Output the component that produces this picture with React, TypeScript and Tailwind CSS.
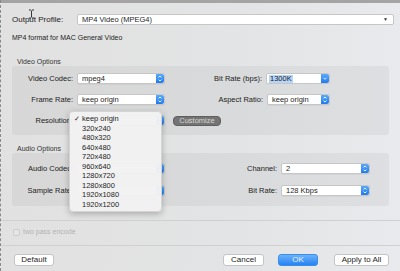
import React from "react";

const Stepper = () => (
  <div className="w-[8px] h-full rounded-r-[2px] bg-[linear-gradient(180deg,#5aa9fb,#1f7cf0)] flex items-center justify-center">
    <svg width="8" height="11" viewBox="0 0 8 11">
      <path d="M2.6 4.4 L4 3 L5.4 4.4" stroke="white" strokeWidth="0.9" fill="none" />
      <path d="M2.6 6.6 L4 8 L5.4 6.6" stroke="white" strokeWidth="0.9" fill="none" />
    </svg>
  </div>
);

function Select({ value, width }: { value: string; width: string }) {
  return (
    <div
      className={`${width} h-[11px] flex items-stretch bg-white rounded-[2px] border border-[#c6c6c6] shadow-[0_0.5px_0_rgba(0,0,0,0.08)]`}
    >
      <div className="flex-1 pl-[4px] text-[7.5px] leading-[9px] text-[#1e1e1e] truncate">{value}</div>
      <Stepper />
    </div>
  );
}

function Label({ text, width }: { text: string; width: string }) {
  return <div className={`${width} pr-[4px] text-right text-[7.5px] leading-[11px] text-[#222] whitespace-nowrap`}>{text}</div>;
}

function Button({ text, width, primary }: { text: string; width: string; primary?: boolean }) {
  return (
    <div
      className={
        primary
          ? `${width} h-[12px] rounded-[3px] bg-[linear-gradient(180deg,#6bb3fb,#2683f2)] border border-[#3a8ef0] text-[8px] leading-[10px] text-center text-[#e8f1fd]`
          : `${width} h-[12px] rounded-[3px] bg-white border border-[#c4c4c4] text-[8px] leading-[10px] text-center text-[#1e1e1e]`
      }
    >
      {text}
    </div>
  );
}

const resolutions = ["keep origin", "320x240", "480x320", "640x480", "720x480", "960x640", "1280x720", "1280x800", "1920x1080", "1920x1200"];

export default function App() {
  return (
    <div className="w-[400px] h-[271px] relative overflow-hidden border-l border-dashed border-[#8a8a8a] bg-[linear-gradient(90deg,#e1e1e1,#e3e4e5_60%,#e8eaed)] font-['Liberation_Sans',sans-serif]">
      <div className="h-[3px] bg-[#a4a4a4]" />
      <div className="pl-[11px] pr-[11px] flex flex-col">
        {/* Header */}
        <div className="mt-[11px] h-[11px] flex items-center mr-[-5px]">
          <div className="w-[65px] text-[8px] leading-[11px] text-[#222]">Output Profile:</div>
          <div className="flex-1 h-[11px] bg-white rounded-[2px] border border-[#c6c6c6] flex items-center pl-[4px] pr-[5px]">
            <div className="flex-1 text-[7.5px] leading-[9px] text-[#1e1e1e]">MP4 Video (MPEG4)</div>
            <div className="text-[5px] leading-[9px] text-[#333]">▼</div>
          </div>
        </div>
        <div className="mt-[9px] h-[8px] text-[7px] leading-[8px] text-[#222]">MP4 format for MAC General Video</div>

        {/* Video options */}
        <div className="mt-[16px] h-[8px] pl-[5px] text-[7px] leading-[8px] text-[#333]">Video Options</div>
        <div className="h-[69px] rounded-[3px] bg-black/[0.045] pt-[7px] flex flex-col gap-[10px]">
          <div className="h-[11px] flex">
            <Label text="Video Codec:" width="w-[65px]" />
            <Select value="mpeg4" width="w-[88px]" />
            <Label text="Bit Rate (bps):" width="w-[101px]" />
            <div className="w-[64px] h-[11px] flex items-stretch bg-white rounded-[2px] border border-[#c6c6c6]">
              <div className="flex-1 pl-[2px] flex items-center">
                <span className="bg-[#b5d5fb] text-[7.5px] leading-[8px] px-[1px] text-[#1e1e1e]">1300K</span>
              </div>
              <div className="w-[8px] rounded-r-[2px] bg-[linear-gradient(180deg,#5aa9fb,#1f7cf0)] flex items-center justify-center">
                <svg width="8" height="9" viewBox="0 0 8 9">
                  <path d="M2.5 3.8 L4 5.3 L5.5 3.8" stroke="white" strokeWidth="0.9" fill="none" />
                </svg>
              </div>
            </div>
          </div>
          <div className="h-[11px] flex">
            <Label text="Frame Rate:" width="w-[65px]" />
            <Select value="keep origin" width="w-[88px]" />
            <Label text="Aspect Ratio:" width="w-[102px]" />
            <Select value="keep origin" width="w-[63px]" />
          </div>
          <div className="h-[11px] flex items-center">
            <Label text="Resolution:" width="w-[65px]" />
            <Select value="" width="w-[88px]" />
            <div className="ml-[8px] w-[48px] h-[10px] rounded-[4px] bg-[#747474] border border-[#5f5f5f] text-[7.5px] leading-[8px] text-center text-[#d6d6d6]">
              Customize
            </div>
          </div>
        </div>

        {/* Audio options */}
        <div className="mt-[10px] h-[8px] pl-[5px] text-[7px] leading-[8px] text-[#333]">Audio Options</div>
        <div className="h-[53px] rounded-[3px] bg-black/[0.045] pt-[10px] flex flex-col gap-[11px]">
          <div className="h-[11px] flex">
            <Label text="Audio Codec:" width="w-[65px]" />
            <Select value="" width="w-[88px]" />
            <Label text="Channel:" width="w-[116px]" />
            <Select value="2" width="w-[89px]" />
          </div>
          <div className="h-[11px] flex">
            <Label text="Sample Rate:" width="w-[65px]" />
            <Select value="" width="w-[88px]" />
            <Label text="Bit Rate:" width="w-[116px]" />
            <Select value="128 Kbps" width="w-[89px]" />
          </div>
        </div>
      </div>

      <div className="mt-[14px] h-px bg-[#d0d0d0]" />
      <div className="mt-[7px] h-[8px] pl-[12px] flex items-center gap-[3px]">
        <div className="w-[7px] h-[7px] rounded-[2px] border border-[#cdcdcd] bg-[#e6e6e6]" />
        <div className="text-[7px] leading-[8px] text-[#b3b3b3]">two pass encode</div>
      </div>
      <div className="mt-[9px] h-px bg-[#d0d0d0]" />
      <div className="mt-[8px] h-[12px] flex pl-[13px] pr-[11px]">
        <Button text="Default" width="w-[40px]" />
        <div className="flex-1" />
        <Button text="Cancel" width="w-[41px]" />
        <div className="w-[14px]" />
        <Button text="OK" width="w-[40px]" primary />
        <div className="w-[16px]" />
        <Button text="Apply to All" width="w-[55px]" />
      </div>

      {/* Resolution popup menu */}
      <div className="absolute left-[68px] top-[111px] w-[93px] h-[101px] rounded-[4px] bg-[#f2f2f2]/[0.97] border border-[#d4d4d4] shadow-[0_2px_6px_rgba(0,0,0,0.25)] pt-[2px]">
        {resolutions.map((r, i) => (
          <div key={r} className="h-[9.5px] flex items-center text-[7.5px] leading-[9.5px] text-[#1e1e1e]">
            <span className="w-[12px] pl-[4px] text-[7px]">{i === 0 ? "✓" : ""}</span>
            <span>{r}</span>
          </div>
        ))}
      </div>

      {/* text cursor */}
      <svg className="absolute left-[27px] top-[9px]" width="7" height="10" viewBox="0 0 7 10">
        <path d="M1 1 H3 M4 1 H6 M3.5 1.5 V8.5 M1 9 H3 M4 9 H6" stroke="#222" strokeWidth="0.9" fill="none" />
      </svg>
    </div>
  );
}
